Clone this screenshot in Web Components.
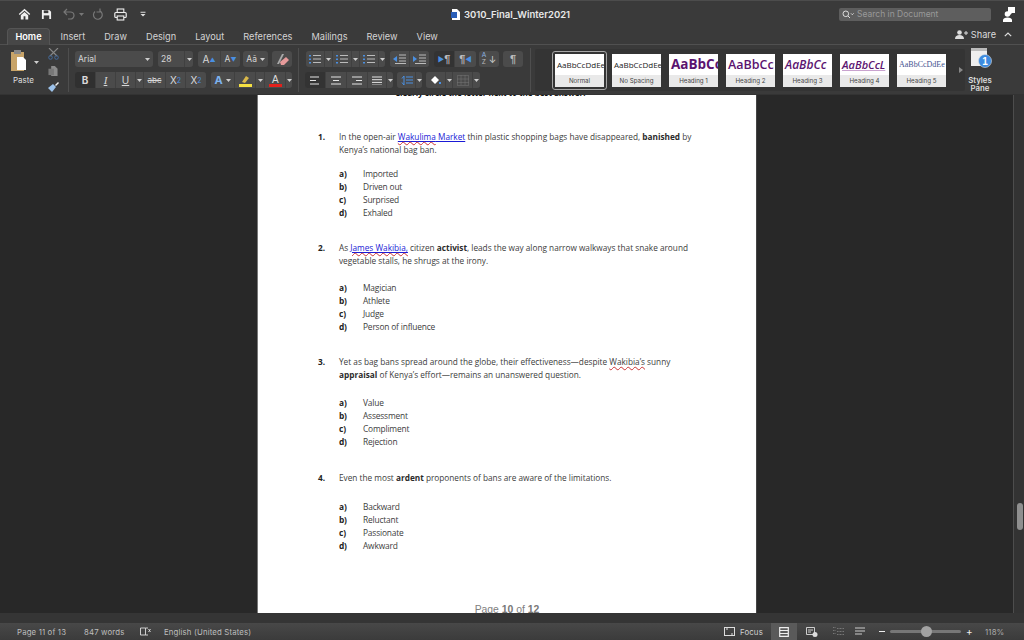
<!DOCTYPE html>
<html><head><meta charset="utf-8"><style>
html,body{margin:0;padding:0;background:#282828;overflow:hidden}
</style></head><body>
<word-app></word-app>
<script>
const UI='"Inter","Liberation Sans",sans-serif';
const DOC='"Open Sans","Liberation Sans",sans-serif';
function def(name,css,html){
  const C=class extends HTMLElement{constructor(){super();const r=this.attachShadow({mode:'open'});r.innerHTML='<style>'+css+'</style>'+(typeof html==='function'?html(this):html);}};
  customElements.define(name,C);
}
const caret='<svg width="5" height="3" viewBox="0 0 5 3"><path d="M0 0h5L2.5 3z" fill="#cfcfcf"/></svg>';

def('r-btn',`:host{display:flex;align-items:center;justify-content:center;height:100%;background:var(--b,#4b4b4b);color:#d8d8d8;box-sizing:border-box;font:10px ${UI};flex:none}`,'<slot></slot>');
def('r-group',`:host{display:flex;height:16px;border-radius:3px;overflow:hidden;gap:1px;background:#404040;flex:none}`,'<slot></slot>');
def('style-card',`:host{display:flex;flex-direction:column;width:49px;height:33px;background:#fff;flex:none;box-sizing:border-box;overflow:hidden}
 .s{flex:1;display:flex;align-items:center;padding-left:2px;white-space:nowrap;overflow:hidden;font:var(--f,8px "Open Sans",sans-serif);color:var(--c,#222);text-decoration:var(--d,none)}
 .l{height:12px;background:#e9e9e9;color:#444;font:6.2px ${UI};text-align:center;line-height:12px;flex:none}`,
 t=>`<div class="s"><slot></slot></div><div class="l">${t.getAttribute('label')}</div>`);
def('title-bar',`:host{display:flex;align-items:center;height:27px;background:#3a3a3a;flex:none;border-top:1px solid #4c4c4c;box-sizing:border-box}
 .qa{display:flex;align-items:center;padding-left:18px;width:440px;box-sizing:border-box}
 .qa svg{display:block}
 .name{display:flex;align-items:center;gap:4px;color:#e8e8e8;font:600 9.5px ${UI};margin-left:11px;flex:1}
 .search{width:152px;height:13px;border-radius:2px;background:#5e5e5e;color:#999;font:8.5px ${UI};display:flex;align-items:center;padding-left:3px;gap:3px;box-sizing:border-box;margin-right:12px}
 .fb{margin-right:9px;width:12px;height:15px}`,
 `<div class="qa">
 <svg width="13" height="12" viewBox="0 0 14 13" style="margin-right:10px"><path d="M7 .8.8 6.500l1 1L7 2.900l5.200 4.600 1-1zM3 7.900v4.600h3V9h2v3.500h3V7.900L7 4.300z" fill="#f0f0f0"/></svg>
 <svg width="11" height="11" viewBox="0 0 12 12" style="margin-right:11px"><path d="M1 1h8l2 2v8H1z" fill="#f0f0f0"/><path d="M3 1.500h5v3H3z" fill="#3a3a3a"/><path d="M3 7h6v4H3z" fill="#3a3a3a"/></svg>
 <svg width="13" height="12" viewBox="0 0 13 12"><path d="M4 1 1 4l3 3M1 4h6.500a3.500 3.500 0 0 1 0 7H5" fill="none" stroke="#777" stroke-width="1.200"/></svg>
 <span style="margin:0 8px 0 3px;display:flex">${caret.replace('#cfcfcf','#777')}</span>
 <svg width="12" height="13" viewBox="0 0 12 13" style="margin-right:10px"><path d="M8 3a4.400 4.400 0 1 1-5 .5M8 .5V4H4.500" fill="none" stroke="#777" stroke-width="1.200"/></svg>
 <svg width="13" height="13" viewBox="0 0 13 13" style="margin-right:13px"><rect x="3.200" y="1" width="6.600" height="3.500" fill="none" stroke="#eee" stroke-width="1.100"/><rect x=".8" y="4.500" width="11.400" height="5" rx="1" fill="none" stroke="#eee" stroke-width="1.200"/><rect x="3.200" y="8" width="6.600" height="4" fill="#3a3a3a" stroke="#eee" stroke-width="1.100"/></svg>
 <svg width="6" height="6" viewBox="0 0 6 6"><path d="M.5 .8h5v1h-5zM.5 3h5L3 5.600z" fill="#ddd"/></svg>
 </div>
 <div class="name"><svg width="9" height="11" viewBox="0 0 9 11"><path d="M1 0h5l3 3v8H1z" fill="#fff"/><rect y="3" width="6" height="6" fill="#2b5fb8"/></svg>3010_Final_Winter2021</div>
 <div class="search"><svg width="12" height="9" viewBox="0 0 12 9"><circle cx="3.800" cy="3.800" r="2.800" fill="none" stroke="#ddd"/><path d="m6 6 2 2M9 3.400l1.300 1.300 1.300-1.300" stroke="#ddd" fill="none"/></svg><span>Search in Document</span></div>
 <svg class="fb" viewBox="0 0 12 15"><path d="M5 0h7v6H9L7 8V6H5z" fill="#fff"/><circle cx="4.500" cy="7" r="2.800" fill="#fff"/><path d="M0 15v-2c0-1.500 2-2.500 4.500-2.500S9 11.500 9 13v2z" fill="#fff"/></svg>`);
def('tab-bar',`:host{display:flex;align-items:flex-end;height:18px;background:#3a3a3a;flex:none;border-bottom:1px solid #505050;box-sizing:border-box;padding-left:7px;font:9.200px ${UI};color:#d4d4d4}
 .t{height:17px;display:flex;align-items:center;padding:0 9.500px;box-sizing:border-box;margin-bottom:-1px;padding-bottom:1px}
 .t.on{background:#474747;border:1px solid #555;border-bottom:none;border-radius:4px 4px 0 0;color:#fff;font-weight:600;padding:0 8px 1px;margin-right:0.500px;width:43px;justify-content:center}
 .sp{flex:1}.sh{align-self:center;display:flex;align-items:center;gap:3px;margin-right:12px;margin-top:-2px;color:#ddd;font-size:9.200px}`,
 `<div class="t on">Home</div><div class="t" style="margin-left:0.500px">Insert</div><div class="t">Draw</div><div class="t">Design</div><div class="t">Layout</div><div class="t">References</div><div class="t">Mailings</div><div class="t">Review</div><div class="t">View</div><div class="sp"></div>
 <div class="sh"><svg width="13" height="9" viewBox="0 0 13 9"><circle cx="4.500" cy="2.500" r="2.300" fill="#ddd"/><path d="M0 9c0-3 2-4 4.500-4S9 6 9 9z" fill="#ddd"/><path d="M9 3h4M11 1v4" stroke="#ddd"/></svg>Share<svg width="8" height="5" viewBox="0 0 8 5" style="margin-left:5px"><path d="M.8 4.200 4 1l3.200 3.200" stroke="#ddd" stroke-width="1.200" fill="none"/></svg></div>`);
const b=(w,c,bg)=>`<r-btn style="width:${w}px${bg?';--b:'+bg:''}">${c}</r-btn>`;
const lines=(k)=>{const x={l:[[0,9],[0,6],[0,9]],c:[[0,10],[2,6],[0,10]],r:[[0,10],[4,6],[0,10]],j:[[0,10],[0,10],[0,10],[0,10]]}[k];return `<svg width="11" height="9" viewBox="0 0 11 9">`+x.map((p,i)=>`<rect x="${p[0]}" y="${i*(x.length==4?2.700:3.500)+.500}" width="${p[1]}" height="1" fill="#e4e4e4"/>`).join('')+`</svg>`};
const list=`<svg width="12" height="10" viewBox="0 0 12 10"><path d="M0 1h2v1.500H0zM0 4.500h2V6H0zM0 8h2v1.500H0z" fill="#4a90e2"/><path d="M4 1.500h8M4 5h8M4 8.500h8" stroke="#bbb"/></svg>`;
const para=(c)=>`<span style="color:${c||'#bbb'};font:bold 11px 'Liberation Sans',sans-serif">¶</span>`;
def('home-ribbon',`:host{display:flex;height:50px;background:#3a3a3a;flex:none;box-sizing:border-box;padding-top:6px;border-bottom:1px solid #333}
 .paste{width:62px;flex:none;position:relative;color:#ddd;font:8px ${UI}}
 .pc{position:absolute;left:11px;top:-1px}
 .pl{position:absolute;left:13px;top:24px}
 .sep{width:1px;background:#4e4e4e;height:44px;flex:none;margin-top:-3px}
 .col{display:flex;flex-direction:column;gap:5px;flex:none}
 .row{display:flex;gap:5px;height:16px}
 .gal{width:430px;height:42px;flex:none;margin-left:4px;margin-top:-2px;background:#343434;display:flex;gap:8px;align-items:center;padding-left:17px;box-sizing:border-box;border-radius:2px}
 .wrap{flex:none;padding:2px;border:1px solid #a6a6a6;border-radius:3px;margin-right:-3px;display:flex}
 .ar{width:0;height:0;border-left:4px solid #888;border-top:3px solid transparent;border-bottom:3px solid transparent;flex:none}
 .gal .ar{margin-left:5px}
 .pane{flex:none;margin-left:0;width:30px;position:relative;color:#ddd;font:600 7.800px/8px ${UI};text-align:center}
 .pi{position:absolute;left:6px;top:-4px}
 .pt{position:absolute;left:0;width:30px;top:25px}`,
 `<div class="paste">
   <svg class="pc" width="16" height="21" viewBox="0 0 16 21"><rect y="2" width="13" height="19" fill="#c8a469"/><rect x="3" width="7" height="4" fill="#888"/><path d="M6 7h6l3 3v10H6z" fill="#fff"/></svg>
   <span style="position:absolute;left:34px;top:10px;display:flex">${caret}</span>
   <span class="pl">Paste</span>
   <div style="position:absolute;left:47px;top:-3px;display:flex;flex-direction:column;gap:6px;align-items:center;width:12px">
     <svg width="11" height="12" viewBox="0 0 11 12"><path d="m1 0 8 8M10 0 2 8" stroke="#888" stroke-width="1.100"/><circle cx="2.500" cy="9.500" r="1.800" fill="none" stroke="#446a9c"/><circle cx="8.500" cy="9.500" r="1.800" fill="none" stroke="#446a9c"/></svg>
     <svg width="10" height="10" viewBox="0 0 10 11"><path d="M3 0h4l3 3v8H3z" fill="#8b8b8b"/><rect y="3" width="6" height="7" fill="#777"/></svg>
     <svg width="12" height="11" viewBox="0 0 12 11"><path d="M1 6 6 2l3 3-4 5z" fill="#9cc2ea"/><path d="m8 3 3-3 1 1-3 3z" fill="#eee"/></svg>
   </div>
 </div>
 <div class="sep" style="margin-right:6px;margin-left:6px"></div>
 <div class="col" style="width:217px">
   <div class="row">
     <r-group><r-btn style="width:78px;justify-content:flex-start;padding-left:3px;font-size:8.500px">Arial<span style="margin-left:auto;margin-right:3px;display:flex">${caret}</span></r-btn></r-group>
     <r-group>${b(26,'<span style="margin-right:auto;padding-left:3px;font-size:8.500px">28</span>')}${b(8,caret)}</r-group>
     <r-group>${b(22,'<span>A</span><span style="color:#4a90e2;font-size:6px">▲</span>')}${b(19,'<span style="font-size:8.500px">A</span><span style="color:#4a90e2;font-size:6px">▼</span>')}</r-group>
     <r-group style="margin-left:-2px">${b(25,'<span style="font-size:8.500px">Aā</span>&nbsp;'+caret)}</r-group>
     <r-group style="margin-left:-1px">${b(20,'<svg width="13" height="13" viewBox="0 0 13 13"><path d="M6 1h2L3 11H1z" fill="#aaa"/><path d="m4 9 6-5 3 3-5 5H5z" fill="#e69a9a"/></svg>')}</r-group>
   </div>
   <div class="row">
     <r-group>${b(20,'<b>B</b>','#303030')}${b(19,'<i style="font-family:Liberation Serif;font-size:11px;text-decoration:underline">I</i>')}${b(19,'<u>U</u>')}${b(7,caret)}${b(21,'<s style="font-size:8px">abc</s>')}${b(19,'X<sub style="color:#4a90e2;font-size:7px">2</sub>')}${b(20,'X<sup style="color:#4a90e2;font-size:7px">2</sup>')}</r-group>
     <r-group>${b(23,'<b style="color:#7db3ef;font-size:11px">A</b>&nbsp;'+caret)}${b(20,'<svg width="13" height="13" viewBox="0 0 13 13"><path d="m3 8 4-6 3 2-4 5z" fill="#d9b84a"/><rect y="10" width="13" height="3" fill="#f5e042"/></svg>')}${b(8,caret)}${b(20,'<svg width="13" height="13" viewBox="0 0 13 13"><rect y="10" width="13" height="3" fill="#e3201b"/><text x="3" y="9" font-size="10" fill="#ddd" font-family="Liberation Sans">A</text></svg>')}${b(6,caret)}</r-group>
   </div>
 </div>
 <div class="sep" style="margin-left:6px;margin-right:6px"></div>
 <div class="col" style="width:218px">
   <div class="row">
     <r-group style="margin-left:1px">${b(18,list)}${b(7,caret)}${b(18,list)}${b(7,caret)}${b(18,list)}${b(6,caret)}</r-group>
     <r-group>${b(19,'<svg width="13" height="10" viewBox="0 0 13 10"><path d="M0 5 4 2v6z" fill="#4a90e2"/><path d="M6 1h7M6 4h7M6 7h7M2 9.500h11" stroke="#bbb"/></svg>')}${b(19,'<svg width="13" height="10" viewBox="0 0 13 10"><path d="M4 5 0 2v6z" fill="#4a90e2"/><path d="M6 1h7M6 4h7M6 7h7M2 9.500h11" stroke="#bbb"/></svg>')}</r-group>
     <r-group>${b(20,'<span style="color:#4a90e2;font-size:7px">▶</span>'+para(),'#333')}${b(21,para()+'<span style="color:#4a90e2;font-size:7px">◀</span>')}</r-group>
     <r-group style="margin-left:-2px">${b(20,'<span style="display:flex;flex-direction:column;font-size:6.500px;line-height:7px;color:#8fb6e6">A<span style="color:#bbb">Z</span></span><span style="font-size:9px">&nbsp;↓</span>')}</r-group>
     <r-group style="margin-left:-1px">${b(20,para())}</r-group>
   </div>
   <div class="row" style="gap:4px">
     <r-group>${b(20,lines('l'),'#333')}${b(20,lines('c'))}${b(20,lines('r'))}${b(18,lines('j'))}${b(6,caret)}</r-group>
     <r-group>${b(18,'<svg width="13" height="11" viewBox="0 0 13 11"><path d="M2 3.500 4 1v9L2 7.500M6 2h7M6 5h7M6 8h7" stroke="#4a90e2" fill="none"/></svg>')}${b(6,caret)}</r-group>
     <r-group>${b(19,'<svg width="11" height="11" viewBox="0 0 11 11"><path d="m1 5 4-4 4 4-4 4z" fill="#fff"/><path d="M10 7v2" stroke="#4a90e2" stroke-width="2"/></svg>')}${b(6,caret)}${b(19,'<svg width="12" height="11" viewBox="0 0 12 11"><path d="M.5.500h11v10H.500zM4 .500v10M8 .500v10M.5 4h11M.5 7.500h11" stroke="#777" stroke-dasharray="1 1" fill="none"/></svg>')}${b(7,caret)}</r-group>
   </div>
 </div>
 <div class="sep" style="margin-left:7px"></div>
 <div class="gal">
   <div class="wrap"><style-card label="Normal">AaBbCcDdEe</style-card></div>
   <style-card label="No Spacing">AaBbCcDdEe</style-card>
   <style-card label="Heading 1" style="--f:700 13.500px 'Open Sans',sans-serif;--c:#5b1470">AaBbCc</style-card>
   <style-card label="Heading 2" style="--f:600 12.500px 'Open Sans',sans-serif;--c:#5b1470">AaBbCc</style-card>
   <style-card label="Heading 3" style="--f:italic 600 12px 'Open Sans',sans-serif;--c:#5b1470">AaBbCc</style-card>
   <style-card label="Heading 4" style="--f:italic 600 11px 'Open Sans',sans-serif;--c:#5b1470;--d:underline #c9a3cf">AaBbCcL</style-card>
   <style-card label="Heading 5" style="--f:8px 'Liberation Serif',serif;--c:#44528f">AaBbCcDdEe</style-card>
   <span class="ar"></span>
 </div>
 <div class="pane">
   <svg class="pi" width="22" height="22" viewBox="0 0 22 22"><rect width="16" height="18" y="1" fill="#eee"/><rect width="16" height="3" y="1" fill="#bbb"/><circle cx="14" cy="14" r="6.500" fill="#3d8be0" stroke="#ddd" stroke-width=".6"/><text x="14" y="17.500" font-size="10" font-weight="700" text-anchor="middle" fill="#fff" font-family="Liberation Sans">1</text></svg>
   <div class="pt">Styles<br>Pane</div>
 </div>`);
def('q-block',`:host{display:block;font:8.250px/13px ${DOC};color:#3c3c3c;padding-left:60px;width:378px;margin-top:var(--mt,0)}
 .stem{display:grid;grid-template-columns:21px 1fr}
 .n{font-weight:700;color:#222}
 .ops{display:grid;grid-template-columns:24px 1fr;grid-auto-rows:13px;margin-top:var(--gap,11px);padding-left:21px;font-size:8.400px;letter-spacing:-.18px}
 .ops b{color:#222}
 ::slotted(b){color:#2b2b2b}`,
 t=>{const o=t.getAttribute('opts').split('|');const a='abcd';
   return `<div class="stem"><div class="n">${t.getAttribute('n')}.</div><div><slot></slot></div></div><div class="ops">${o.map((x,i)=>`<b>${a[i]})</b><span>${x}</span>`).join('')}</div>`});
def('doc-canvas',`:host{display:flex;flex:1;min-height:0;background:#282828;overflow:hidden}
 .area{flex:1;display:flex;justify-content:center;padding-left:1px;min-width:0}
 .page{width:498px;background:#fff;border-left:1px solid #777;border-right:1px solid #444;display:flex;flex-direction:column;overflow:hidden}
 .cut{font:bold 8px/8px ${DOC};color:#111;height:2px;margin-top:-6px;padding:0 0 4px 137px;white-space:nowrap;overflow:visible;flex:none}
 .flow{padding-top:35px;flex:1}
 .foot{color:#808080;font:10.400px/11px "Liberation Sans",sans-serif;text-align:center;height:9px;overflow:hidden;flex:none}
 .foot b{color:#777}
 .track{width:11px;flex:none;background:#333;border-left:1px solid #4d4d4d;display:flex;justify-content:center;padding-top:408px;box-sizing:border-box}
 .thumb{width:6px;height:27px;border-radius:3px;background:#8f8f8f;margin-left:1px}`,
 `<div class="area"><div class="page"><div class="cut">Clearly circle the letter next to the best answer.</div><div class="flow"><slot></slot></div><div class="foot">Page <b>10</b> of <b>12</b></div></div></div><div class="track"><div class="thumb"></div></div>`);
def('status-bar',`:host{display:flex;align-items:center;height:17px;background:linear-gradient(#484848,#3b3b3b);flex:none;font:7.800px ${UI};color:#bdbdbd;padding-left:17px;box-sizing:border-box;white-space:nowrap;letter-spacing:.15px}
 span{flex:none}
 .sp{flex:1}
 .ic{display:flex;align-items:center;justify-content:center;height:17px;flex:none}`,
 `<span style="width:67px">Page 11 of 13</span><span style="width:56px">847 words</span>
 <svg width="11" height="9" viewBox="0 0 11 9" style="margin-right:13px;flex:none"><path d="M.5 1h5v7h-5zM5.500 1H8M5.500 8H8M8.500 2l2 3M10.500 2l-2 3" fill="none" stroke="#ddd" stroke-width=".9"/></svg>
 <span>English (United States)</span><span class="sp"></span>
 <svg width="11" height="9" viewBox="0 0 11 9" style="margin-right:5px;flex:none"><rect x=".5" y=".5" width="10" height="8" fill="none" stroke="#ddd"/><path d="M2 2h2M7 7h2" stroke="#ddd"/></svg><span style="width:31px;color:#d0d0d0">Focus</span>
 <div class="ic" style="width:26px;background:#5a5a5a"><svg width="10" height="10" viewBox="0 0 10 10"><path d="M.7.700h8.600v8.600H.700zM1 3.500h8M1 6.500h8" stroke="#eee" stroke-width="1.200" fill="none"/></svg></div>
 <div class="ic" style="width:29px"><svg width="12" height="10" viewBox="0 0 12 10"><path d="M.5.500h8v7h-8zM2 3h5M2 5h3" stroke="#ddd" fill="none" stroke-width=".9"/><circle cx="9" cy="7.500" r="2.500" fill="#ddd"/></svg></div>
 <div class="ic" style="width:24px"><svg width="11" height="9" viewBox="0 0 11 9"><path d="M0 .500h3M4 1.500h7M0 3.500h3M4 4.500h7M0 6.500h3M4 7.500h7" stroke="#777" stroke-dasharray="1 .5"/></svg></div>
 <div class="ic" style="width:20px"><svg width="10" height="9" viewBox="0 0 10 9"><path d="M0 1h10M0 4h10M0 7h7" stroke="#ccc"/></svg></div>
 <div style="width:6px;height:1.500px;background:#eee;margin-left:9px;flex:none"></div>
 <div style="width:71px;height:3px;background:#777;border-radius:2px;margin-left:5px;position:relative;flex:none"><i style="position:absolute;left:31px;top:-4px;width:11px;height:11px;border-radius:50%;background:#a2a2a2"></i></div>
 <span style="color:#eee;font-size:10px;margin:-2px 0 0 5px;width:19px">+</span><span style="width:39px;color:#aaa">118%</span>`);
def('word-app',`:host{display:flex;flex-direction:column;width:1024px;height:640px;overflow:hidden;background:#282828}
 .gap{height:10px;background:#353535;flex:none}`,
 `<title-bar></title-bar><tab-bar></tab-bar><home-ribbon></home-ribbon>
 <doc-canvas>
 <q-block n="1" opts="Imported|Driven out|Surprised|Exhaled">In the open-air <a style="color:#1a1ad6;text-decoration:underline"><span style="text-decoration:underline wavy #c33 .5px">Wakulima</span> Market</a> thin plastic shopping bags have disappeared, <b>banished</b> by Kenya’s national bag ban.</q-block>
 <q-block n="2" style="--mt:22px;--gap:14px" opts="Magician|Athlete|Judge|Person of influence">As <a style="color:#1a1ad6;text-decoration:underline"><span style="text-decoration:underline wavy #c33 .5px">James Wakibia,</span></a> citizen <b>activist</b>, leads the way along narrow walkways that snake around vegetable stalls, he shrugs at the irony.</q-block>
 <q-block n="3" style="--mt:22px;--gap:15px" opts="Value|Assessment|Compliment|Rejection">Yet as bag bans spread around the globe, their effectiveness—despite <span style="text-decoration:underline wavy #c33 .5px">Wakibia’s</span> sunny <b>appraisal</b> of Kenya’s effort—remains an unanswered question.</q-block>
 <q-block n="4" style="--mt:23px;--gap:16px" opts="Backward|Reluctant|Passionate|Awkward">Even the most <b>ardent</b> proponents of bans are aware of the limitations.</q-block>
 </doc-canvas>
 <div class="gap"></div><status-bar></status-bar>`);
</script>
</body></html>
